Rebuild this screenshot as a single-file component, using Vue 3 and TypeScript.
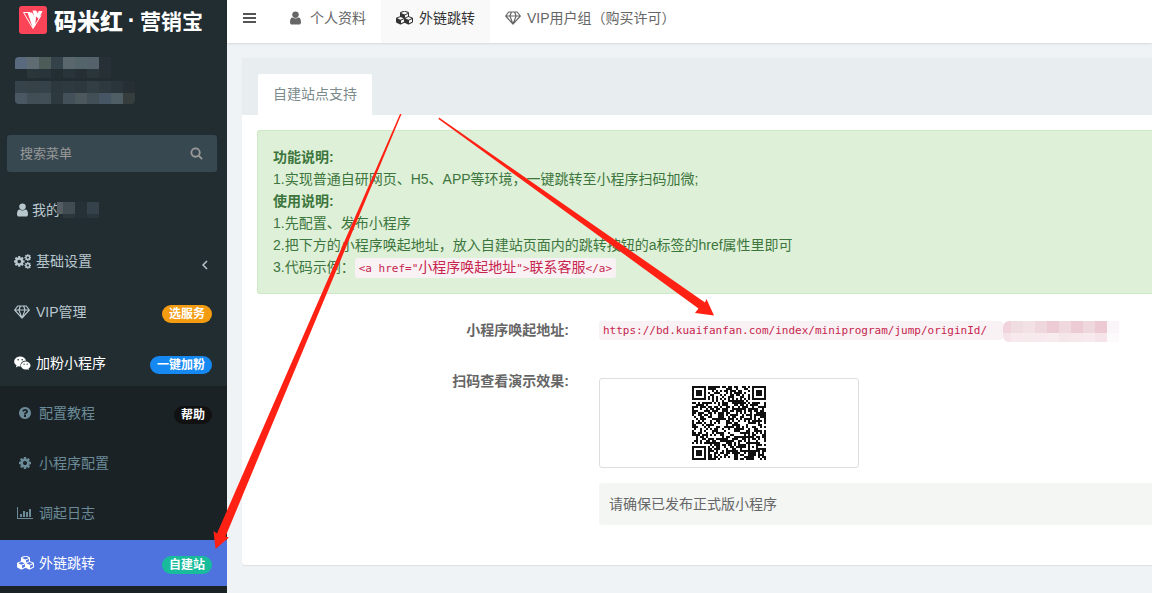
<script setup lang="ts">
import { ref } from 'vue'

interface Badge { text: string; tone: string }
interface MenuItem { icon: string; text: string; badge?: Badge; arrow?: boolean; masked?: boolean; active?: boolean }
interface Cell { x: number; y: number; w: number; h: number; c: string }

const cog = 'M1152 896q0-106-75-181t-181-75-181 75-75 181 75 181 181 75 181-75 75-181zm512-109v222q0 12-8 23t-20 13l-185 28q-19 54-39 91 35 50 107 138 10 12 10 25t-9 23q-27 37-99 108t-94 71q-12 0-26-9l-138-108q-44 23-91 38-16 136-29 186-7 28-36 28h-222q-14 0-24.5-8.5t-11.5-21.5l-28-184q-49-16-90-37l-141 107q-10 9-25 9-14 0-25-11-126-114-165-168-7-10-7-23 0-12 8-23 15-21 51-66.5t54-70.5q-27-50-41-99l-183-27q-13-2-21-12.5t-8-23.5v-222q0-12 8-23t19-13l186-28q14-46 39-92-40-57-107-138-10-12-10-24 0-10 9-23 26-36 98.5-107.5t94.5-71.5q13 0 26 10l138 107q44-23 91-38 16-136 29-186 7-28 36-28h222q14 0 24.5 8.5t11.5 21.5l28 184q49 16 90 37l142-107q9-9 24-9 13 0 25 10 129 119 165 170 7 8 7 22 0 12-8 23-15 21-51 66.5t-54 70.5q26 50 41 98l183 28q13 2 21 12.5t8 23.5z'

const icons: Record<string, { box: string; d: string; w: number; line?: boolean }> = {
  user: { box: '256 128 1280 1536', w: 11, d: 'M1536 1399q0 109-62.5 187t-150.5 78h-854q-88 0-150.5-78t-62.5-187q0-85 8.5-160.5t31.5-152 58.5-131 94-89 134.5-34.5q131 128 313 128t313-128q76 0 134.5 34.5t94 89 58.5 131 31.5 152 8.5 160.5zm-256-887q0 159-112.5 271.5t-271.5 112.5-271.5-112.5-112.5-271.5 112.5-271.5 271.5-112.5 271.5 112.5 112.5 271.5z' },
  cog: { box: '128 128 1536 1536', w: 12, d: cog },
  gem: { box: '0 0 16 14', w: 16, line: true, d: 'M3.7 1h8.6l3 4L8 13.1.7 5zM.7 5h14.6M6.4 1 4.9 5 8 13.1 11.1 5 9.6 1' },
  chat: { box: '0 0 17 14', w: 17, d: 'M6.2.6C2.9.6.2 2.8.2 5.6c0 1.600.9 2.900 2.300 3.900l-.6 1.900 2.200-1.100c.8.2 1.300.3 2.100.3h.5c-.1-.4-.2-.8-.2-1.200 0-2.600 2.300-4.600 5.100-4.600h.5C11.600 2.400 9.100.6 6.200.6zM4.200 3a.8.8 0 1 1 0 1.600.8.800 0 0 1 0-1.600zm4 0a.8.8 0 1 1 0 1.600.8.800 0 0 1 0-1.600zM11.700 5.500c-2.700 0-4.800 1.800-4.800 4s2.100 4 4.800 4c.6 0 1.100-.1 1.700-.3l1.500.9-.4-1.500c1.100-.8 2-1.900 2-3.100 0-2.200-2.200-4-4.800-4zm-1.600 2a.6.6 0 1 1 0 1.300.6.600 0 0 1 0-1.300zm3.100 0a.6.6 0 1 1 0 1.300.6.600 0 0 1 0-1.300z' },
  help: { box: '128 128 1536 1536', w: 12, d: 'M1024 1376v-192q0-14-9-23t-23-9h-192q-14 0-23 9t-9 23v192q0 14 9 23t23 9h192q14 0 23-9t9-23zm256-672q0-88-55.5-163t-138.5-116-170-41q-243 0-371 213-15 24 8 42l132 100q7 6 19 6 16 0 25-12 53-68 86-92 34-24 86-24 48 0 85.5 26t37.5 59q0 38-20 61t-68 45q-63 28-115.500 86.500t-52.500 125.500v36q0 14 9 23t23 9h192q14 0 23-9t9-23q0-19 21.500-49.500t54.500-49.500q32-18 49-28.500t46-35 44.500-48 28-60.500 12.500-81zm384 192q0 209-103 385.500t-279.500 279.500-385.500 103-385.500-103-279.500-279.500-103-385.500 103-385.500 279.500-279.500 385.500-103 385.500 103 279.500 279.500 103 385.500z' },
  chart: { box: '0 0 16 12', w: 16, d: 'M0 0h1v11h15v1H0zM3 7h2v3H3zM6 4h2v6H6zM9 5h2v5H9zM12 2h2v8h-2z' },
  cubes: { box: '0 128 2176 1664', w: 17, d: 'M640 1632l384-192v-314l-384 164v342zm-64-454l404-173-404-173-404 173zm1088 454l384-192v-314l-384 164v342zm-64-454l404-173-404-173-404 173zm-448-293l384-165v-266l-384 164v267zm-64-379l441-189-441-189-441 189zm1088 518v416q0 36-19 67t-52 47l-448 224q-25 14-57 14t-57-14l-448-224q-5-2-7-4-2 2-7 4l-448 224q-25 14-57 14t-57-14l-448-224q-33-16-52-47t-19-67v-416q0-38 21.500-70t56.500-48l434-186v-400q0-38 21.500-70t56.500-48l448-192q23-10 50-10t50 10l448 192q35 16 56.500 48t21.500 70v400l434 186q36 16 57 48t21 70z' },
}

const menu: MenuItem[] = [
  { icon: 'user', text: '我的', masked: true },
  { icon: 'cogs', text: '基础设置', arrow: true },
  { icon: 'gem', text: 'VIP管理', badge: { text: '选服务', tone: 'orange' } },
  { icon: 'chat', text: '加粉小程序', badge: { text: '一键加粉', tone: 'blue' }, active: true },
]
const submenu: MenuItem[] = [
  { icon: 'help', text: '配置教程', badge: { text: '帮助', tone: 'black' } },
  { icon: 'cog', text: '小程序配置' },
  { icon: 'chart', text: '调起日志' },
  { icon: 'cubes', text: '外链跳转', badge: { text: '自建站', tone: 'green' }, active: true },
]
const tabs: MenuItem[] = [
  { icon: 'user', text: '个人资料' },
  { icon: 'cubes', text: '外链跳转', active: true },
  { icon: 'gem', text: 'VIP用户组（购买许可）' },
]
const keyword = ref('')

function row(y: number, h: number, colors: string[], x = 0, w = 12): Cell[] {
  return colors.map((c, i) => ({ x: x + i * w, y, w, h, c }))
}
const profileCells: Cell[] = [
  ...row(0, 12, ['#596a7f', '#5f6c72', '#4d5b59', '#344249', '#5a676d', '#53656a', '#55626b', '#263036']),
  ...row(12, 9, ['#2b363b', '#29343a', '#232e33', '#29343a', '#252f34', '#2b363b', '#263035'], 12),
  ...row(24, 12, ['#37434b', '#364148', '#36424a', '#2c373e', '#2e3940', '#2d383e', '#333e44', '#2d383f', '#2a353b', '#252f34']),
  ...row(36, 11, ['#4a5863', '#414e55', '#434f56', '#2d383f', '#435059', '#4b575b', '#434f57', '#465664', '#4f5d65', '#353d3d']),
]
const nameCells: Cell[] = [
  { x: 0, y: 0, w: 6, h: 12, c: '#535d62' },
  ...row(0, 12, ['#414c52', '#263137', '#36424b'], 6),
  ...row(12, 4, ['#2c373c', '#263137', '#2b363c'], 6),
]
const urlCells: Cell[] = [
  ...row(0, 12, ['#f0d3dc', '#f0dde1', '#f2e2e5', '#efd7de', '#edcbd5', '#efd9df', '#edcbd5', '#efd7de', '#edcad3', '#faf5f9'], -4),
  ...row(12, 9, ['#f5e3e8', '#f7e9ed', '#f7eaed', '#f7e9ed', '#f8ecef', '#f5e6ea', '#f7e8ec', '#f7e9ed', '#f5e4e9', '#fdfafc'], -4),
]

/* Version 5 symbol: finders, timing lines, one alignment mark, data area */
const size = 37
function ring(x: number, y: number, cx: number, cy: number): number {
  return Math.max(Math.abs(x - cx), Math.abs(y - cy))
}
function qrPath(): string {
  let seed = 20731
  let d = ''
  for (let y = 0; y < size; y++) {
    for (let x = 0; x < size; x++) {
      seed = (seed * 1103515245 + 12345) % 2147483648
      let on = seed / 2147483648 < 0.56
      if (x === 6 || y === 6) on = (x + y) % 2 === 0
      const a = ring(x, y, 30, 30)
      if (a <= 2) on = a !== 1
      for (const [cx, cy] of [[3, 3], [33, 3], [3, 33]]) {
        const r = ring(x, y, cx, cy)
        if (r <= 4) on = r !== 4 && r !== 2
      }
      if (on) d += `M${x} ${y}h1v1h-1z`
    }
  }
  return d
}
const qr = qrPath()
</script>

<template>
  <div class="page">
    <aside class="side">
      <a class="logo" href="#">
        <svg class="mark" viewBox="0 0 28 28" aria-hidden="true">
          <rect width="28" height="28" rx="3" fill="#fb4458" />
          <path d="M11 6.500H4.500L14 22.500l8-13" fill="none" stroke="#fff" stroke-width="1" />
          <path d="M8.500 6.500H13l3.500 5.500v7L14 22.500z" fill="#fff" />
          <path d="M13.500 4.500h3.500l2 3 .500-2.500h4l-3.500 8-3-2.500-.500 5z" fill="#fff" />
        </svg>
        <span class="brand">码米红</span><span class="dot">·</span><span class="product">营销宝</span>
      </a>
      <svg class="profile" viewBox="0 0 120 47" aria-hidden="true">
        <rect v-for="(c, i) in profileCells" :key="i" :x="c.x" :y="c.y" :width="c.w" :height="c.h" :fill="c.c" />
      </svg>
      <form class="search" @submit.prevent>
        <input v-model="keyword" type="text" placeholder="搜索菜单" aria-label="搜索菜单" />
        <button type="submit" aria-label="搜索">
          <svg viewBox="0 0 14 14" aria-hidden="true"><circle cx="6" cy="6" r="4.500" /><path d="m9.500 9.500 3.500 3.500" /></svg>
        </button>
      </form>
      <nav>
        <ul class="menu">
          <li v-for="m in menu" :key="m.text">
            <a href="#" :class="{ active: m.active, tight: m.masked }">
              <span class="ico">
                <svg v-if="m.icon === 'cogs'" width="17" height="15" viewBox="0 0 1940 1700" fill="currentColor" aria-hidden="true">
                  <path :d="cog" transform="translate(-120 130) scale(.8)" />
                  <path :d="cog" transform="translate(1130 -50) scale(.5)" />
                  <path :d="cog" transform="translate(1130 850) scale(.5)" />
                </svg>
                <svg v-else :width="icons[m.icon].w" height="14" :viewBox="icons[m.icon].box" :class="{ line: icons[m.icon].line }" aria-hidden="true"><path :d="icons[m.icon].d" /></svg>
              </span>
              <span class="text">{{ m.text }}</span>
              <svg v-if="m.masked" class="name" viewBox="0 0 44 16" aria-hidden="true">
                <rect v-for="(c, i) in nameCells" :key="i" :x="c.x" :y="c.y" :width="c.w" :height="c.h" :fill="c.c" />
              </svg>
              <svg v-if="m.arrow" class="chevron" viewBox="0 0 6 10" aria-hidden="true"><path d="M5 1 1 5l4 4" /></svg>
              <span v-if="m.badge" class="badge" :class="m.badge.tone">{{ m.badge.text }}</span>
            </a>
          </li>
        </ul>
        <ul class="submenu">
          <li v-for="m in submenu" :key="m.text">
            <a href="#" :class="{ current: m.active }">
              <span class="ico">
                <svg :width="icons[m.icon].w" height="14" :viewBox="icons[m.icon].box" aria-hidden="true"><path :d="icons[m.icon].d" /></svg>
              </span>
              <span class="text">{{ m.text }}</span>
              <span v-if="m.badge" class="badge" :class="m.badge.tone">{{ m.badge.text }}</span>
            </a>
          </li>
        </ul>
      </nav>
    </aside>

    <div class="main">
      <header class="top">
        <button class="toggle" type="button" aria-label="切换菜单">
          <svg viewBox="0 0 13 12" aria-hidden="true"><path d="M0 1h13v2H0zM0 5h13v2H0zM0 9h13v2H0z" /></svg>
        </button>
        <nav class="tabs">
          <a v-for="t in tabs" :key="t.text" href="#" :class="{ on: t.active }">
            <svg :width="icons[t.icon].w" height="14" :viewBox="icons[t.icon].box" :class="{ line: icons[t.icon].line, person: t.icon === 'user' }" aria-hidden="true"><path :d="icons[t.icon].d" /></svg>
            <span>{{ t.text }}</span>
          </a>
        </nav>
      </header>

      <main class="content">
        <section class="panel">
          <div class="heading"><a class="tab" href="#">自建站点支持</a></div>
          <div class="body">
            <div class="alert">
              <p><strong>功能说明:</strong></p>
              <p>1.实现普通自研网页、H5、APP等环境，一键跳转至小程序扫码加微;</p>
              <p><strong>使用说明:</strong></p>
              <p>1.先配置、发布小程序</p>
              <p>2.把下方的小程序唤起地址，放入自建站页面内的跳转按钮的a标签的href属性里即可</p>
              <p>3.代码示例：<code>&lt;a href="<span class="han">小程序唤起地址</span>"&gt;<span class="han">联系客服</span>&lt;/a&gt;</code></p>
            </div>
            <dl class="form">
              <dt>小程序唤起地址:</dt>
              <dd class="address">
                <code>https://bd.kuaifanfan.com/index/miniprogram/jump/originId/</code>
                <svg viewBox="0 0 116 21" aria-hidden="true">
                  <rect v-for="(c, i) in urlCells" :key="i" :x="c.x" :y="c.y" :width="c.w" :height="c.h" :fill="c.c" />
                </svg>
              </dd>
              <dt>扫码查看演示效果:</dt>
              <dd>
                <div class="thumb">
                  <svg viewBox="0 0 37 37" role="img" aria-label="二维码"><path :d="qr" /></svg>
                </div>
                <p class="note">请确保已发布正式版小程序</p>
              </dd>
            </dl>
          </div>
        </section>
      </main>
    </div>

    <svg class="arrows" width="1152" height="593" viewBox="0 0 1152 593" aria-hidden="true">
      <path d="M400 114h1.500L225.500 536.500l3.500 1L215.500 549l-2-18 3.500 2.500z" />
      <path d="M439 117.500 705 302.500l1.500-3.500 7.500 16.500-19-2.500 3.500-4.500L438.500 119z" />
    </svg>
  </div>
</template>

<style>
body { margin: 0; background: #f0f3f6; }
</style>

<style scoped>
.page { position: relative; display: flex; min-height: 100vh; overflow: hidden; font: 14px/22px "Liberation Sans", "Noto Sans CJK SC", sans-serif; color: #666; }
.page * { box-sizing: border-box; }
a { color: inherit; text-decoration: none; }
ul, dl, dd, p { margin: 0; padding: 0; list-style: none; }
svg { flex: none; display: block; fill: currentColor; }
path { fill-rule: evenodd; }
.line { fill: none; stroke: currentColor; stroke-width: 1.2; stroke-linejoin: round; }

.side { flex: none; display: flex; flex-direction: column; width: 227px; background: #222d32; }
.logo { display: flex; align-items: center; height: 40px; padding-left: 19px; color: #fff; font-family: "Noto Sans CJK SC", sans-serif; }
.mark { width: 28px; height: 28px; margin-right: 7px; }
.brand { font-size: 23px; font-weight: 900; }
.dot { width: 17px; text-align: center; font-family: "Liberation Sans", sans-serif; font-size: 23px; font-weight: 700; }
.product { font-size: 21px; font-weight: 700; }
.profile { width: 120px; height: 47px; margin: 17px 0 31px 15px; border-radius: 4px; }
.search { display: flex; height: 37px; margin: 0 10px 15px 7px; border-radius: 3px; background: #374850; color: #999; }
.search input { flex: 1; min-width: 0; padding: 0 13px; border: 0; outline: 0; background: none; color: inherit; font: 13px "Liberation Sans", "Noto Sans CJK SC", sans-serif; }
.search input::placeholder { color: #999; opacity: 1; }
.search button { display: flex; align-items: center; justify-content: center; width: 42px; padding: 0; border: 0; background: none; color: inherit; }
.search svg { width: 13px; height: 13px; fill: none; stroke: currentColor; stroke-width: 2; }
.side nav { flex: 1; display: flex; flex-direction: column; }
.menu { display: grid; gap: 5px; }
.menu a, .submenu a { display: flex; align-items: center; height: 46px; padding: 0 15px 0 12px; color: #b8c7ce; }
.menu a.active { color: #fff; }
.ico { display: flex; justify-content: center; width: 20px; margin-right: 4px; }
.tight .ico { margin-right: 0; }
.name { width: 44px; height: 16px; margin-left: -3px; }
.chevron { width: 6px; height: 10px; margin: 8px 4px 0 auto; fill: none; stroke: currentColor; stroke-width: 1.5; }
.badge { height: 18px; margin: 3px 0 0 auto; padding: 0 7px; border-radius: 9px; color: #fff; font-size: 12px; font-weight: 700; line-height: 18px; }
.orange { background: #f39c12; }
.blue { background: #1688f1; }
.black { background: #111; }
.green { background: #18bc9c; }
.submenu { flex: 1; display: grid; gap: 4px; align-content: start; padding-top: 4px; background: #1a2226; }
.submenu a { padding-left: 15px; color: #6c8b98; }
.submenu a.current { background: #4e73df; color: #fff; }

.main { flex: 1; min-width: 0; }
.top { display: flex; height: 43px; background: #fff; box-shadow: 0 1px 2px rgba(0, 21, 41, .12); }
.toggle { display: flex; justify-content: center; width: 46px; padding: 12px 2px 0 0; border: 0; background: none; color: #555; }
.toggle svg { width: 13px; height: 12px; }
.tabs { display: flex; }
.tabs a { display: flex; gap: 6px; padding: 7px 15px 0; white-space: nowrap; }
.tabs svg { margin-top: 4px; }
.tabs .person { margin: 4px 3px 0 2px; }
.tabs a.on { background: #f9f9f9; color: #333; }
.content { padding: 15px 0 28px 15px; }
.panel { background: #fff; border-radius: 3px 0 0 3px; box-shadow: 0 1px 1px rgba(0, 0, 0, .08); }
.heading { display: flex; padding: 16px 16px 0; background: #e8edf0; }
.tab { height: 41px; padding: 9px 15px 0; border-radius: 2px 2px 0 0; background: #fff; color: #7b8a8b; }
.body { padding: 15px 0 40px 15px; }
.alert { padding: 15px; border: 1px solid #cfe8c6; border-right: 0; border-radius: 3px 0 0 3px; background: #dff0d8; color: #3c763d; }
code { display: inline-block; padding: 0 4px; border-radius: 3px; background: #f9f2f4; color: #c7254e; font: 11px/19px "DejaVu Sans Mono", "Noto Sans CJK SC", monospace; white-space: nowrap; }
.han { font-size: 14px; }
.form { display: grid; grid-template-columns: 312px 1fr; column-gap: 30px; row-gap: 29px; padding-top: 25px; }
dt { font-weight: 700; text-align: right; }
.address { display: flex; align-items: flex-start; height: 22px; padding-top: 2px; }
.address code { min-width: 404px; }
.address svg { width: 116px; height: 21px; border-radius: 6px 0 0 6px; }
.thumb { display: flex; align-items: center; justify-content: center; width: 260px; height: 90px; margin-top: 8px; border: 1px solid #ddd; border-radius: 3px; color: #111; }
.thumb svg { width: 74px; height: 74px; }
.note { margin-top: 15px; padding: 10px; border-radius: 3px 0 0 3px; background: #f4f6f4; }
.arrows { position: absolute; top: 0; left: 0; fill: #ff2113; pointer-events: none; }
</style>
